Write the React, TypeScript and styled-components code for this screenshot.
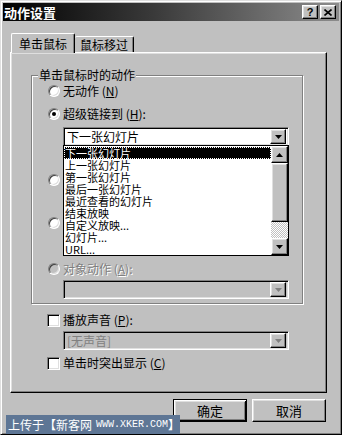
import React from 'react';
import styled, { createGlobalStyle, css } from 'styled-components';

const FONT = `"Noto Sans CJK SC", "Liberation Sans", sans-serif`;

const GlobalStyle = createGlobalStyle`
  html, body {
    margin: 0;
    padding: 0;
    background: #c0c0c0;
  }
  body {
    font-family: ${FONT};
    font-size: 12px;
    color: #000;
  }
  * {
    box-sizing: border-box;
  }
`;

const sunken = css`
  border: 1px solid;
  border-color: #808080 #fff #fff #808080;
  box-shadow: inset 1px 1px 0 #000, inset -1px -1px 0 #dfdfdf;
`;

const raised = css`
  border: 1px solid;
  border-color: #fff #000 #000 #fff;
  box-shadow: inset -1px -1px 0 #808080, inset 1px 1px 0 #dfdfdf;
`;

const Window = styled.div`
  position: relative;
  width: 342px;
  height: 435px;
  background: #c0c0c0;
  border: 1px solid;
  border-color: #dfdfdf #000 #000 #dfdfdf;
  box-shadow: inset 1px 1px 0 #fff, inset -1px -1px 0 #808080;
  padding: 2px;
  display: flex;
  flex-direction: column;
  overflow: hidden;
`;

const TitleBar = styled.div`
  height: 18px;
  display: flex;
  align-items: center;
  padding: 0 3px 0 1px;
  background: linear-gradient(90deg, #000 0%, #3a3a3a 45%, #8c8c8c 100%);
`;

const TitleText = styled.span`
  color: #fff;
  font-weight: bold;
  font-size: 13px;
  line-height: 15px;
`;

const TitleButtons = styled.div`
  margin-left: auto;
  display: flex;
  gap: 2px;
`;

const TitleButton = styled.div`
  ${raised};
  width: 16px;
  height: 14px;
  display: flex;
  align-items: center;
  justify-content: center;
  background: #c0c0c0;
  font-family: "Liberation Sans", sans-serif;
  font-weight: bold;
  font-size: 11px;
  line-height: 11px;
`;

const Body = styled.div`
  padding: 12px 12px 0 7px;
`;

const TabRow = styled.div`
  display: flex;
  align-items: flex-end;
  padding-left: 1px;
  height: 19px;
`;

const Tab = styled.div<{ $active?: boolean }>`
  position: relative;
  background: #c0c0c0;
  border-top: 1px solid #fff;
  border-left: 1px solid #fff;
  border-right: 1px solid #000;
  border-radius: 2px 2px 0 0;
  box-shadow: inset -1px 0 0 #808080;
  display: flex;
  align-items: center;
  font-size: 12px;
  ${(p) =>
    p.$active
      ? css`
          height: 20px;
          margin-bottom: -1px;
          padding: 0 7px 0 7px;
          z-index: 2;
        `
      : css`
          height: 16px;
          padding: 0 5px 0 5px;
          border-left: none;
        `}
`;

const Panel = styled.div`
  position: relative;
  height: 341px;
  border: 1px solid;
  border-color: #fff #000 #000 #fff;
  box-shadow: inset -1px -1px 0 #808080, inset 1px 1px 0 #dfdfdf;
  padding: 0 0 0 20px;
`;

const GroupBox = styled.div`
  position: relative;
  width: 272px;
  margin-top: 22px;
  padding: 0 0 4px 16px;
  border: 1px solid #808080;
  box-shadow: inset 1px 1px 0 #fff, 1px 1px 0 #fff;
`;

const GroupLabel = styled.span`
  position: absolute;
  top: -9px;
  left: 6px;
  padding: 0 1px;
  background: #c0c0c0;
  line-height: 16px;
`;

const OptionRow = styled.div<{ $mt: number; $ml?: number }>`
  display: flex;
  align-items: center;
  gap: 3px;
  height: 16px;
  margin-top: ${(p) => p.$mt}px;
  margin-left: ${(p) => p.$ml ?? 0}px;
  line-height: 16px;
`;

const Label = styled.span<{ $disabled?: boolean }>`
  white-space: nowrap;
  ${(p) =>
    p.$disabled &&
    css`
      color: #808080;
      text-shadow: 1px 1px 0 #fff;
    `}
`;

const Radio = styled.span<{ $checked?: boolean; $disabled?: boolean }>`
  position: relative;
  width: 12px;
  height: 12px;
  flex: none;
  border-radius: 50%;
  border: 1px solid;
  border-color: #808080 #fff #fff #808080;
  box-shadow: inset 1px 1px 0 #404040, inset -1px -1px 0 #dfdfdf;
  background: ${(p) => (p.$disabled ? '#c0c0c0' : '#fff')};
  &::after {
    content: '';
    display: ${(p) => (p.$checked ? 'block' : 'none')};
    position: absolute;
    left: 3px;
    top: 3px;
    width: 4px;
    height: 4px;
    border-radius: 50%;
    background: #000;
  }
`;

const Checkbox = styled.span`
  ${sunken};
  width: 13px;
  height: 13px;
  flex: none;
  background: #fff;
`;

const Field = styled.div<{ $mt: number; $ml: number; $w: number; $disabled?: boolean }>`
  ${sunken};
  position: relative;
  display: flex;
  align-items: center;
  width: ${(p) => p.$w}px;
  height: 19px;
  margin-top: ${(p) => p.$mt}px;
  margin-left: ${(p) => p.$ml}px;
  padding: 2px 2px 2px 3px;
  background: ${(p) => (p.$disabled ? '#c0c0c0' : '#fff')};
  color: ${(p) => (p.$disabled ? '#808080' : '#000')};
  line-height: 15px;
`;

const FieldText = styled.span`
  flex: 1;
  white-space: nowrap;
`;

const ArrowButton = styled.div<{ $h?: number; $w?: number }>`
  ${raised};
  width: ${(p) => p.$w ?? 16}px;
  height: ${(p) => p.$h ?? 15}px;
  flex: none;
  background: #c0c0c0;
  display: flex;
  align-items: center;
  justify-content: center;
`;

const FieldRow = styled.div<{ $mt: number }>`
  display: flex;
  gap: 4px;
  margin-top: ${(p) => p.$mt}px;
  margin-left: 15px;
`;

const SmallButton = styled.div`
  ${raised};
  width: 60px;
  height: 19px;
  background: #c0c0c0;
`;

const DropList = styled.div`
  position: absolute;
  top: 17px;
  left: -1px;
  width: 226px;
  height: 111px;
  z-index: 5;
  display: flex;
  border: 1px solid #000;
  background: #fff;
  color: #000;
`;

const ListItems = styled.div`
  flex: 1;
  padding-top: 1px;
`;

const ListItem = styled.div<{ $selected?: boolean }>`
  height: 12px;
  line-height: 12px;
  font-size: 11px;
  padding-left: 1px;
  white-space: nowrap;
  ${(p) =>
    p.$selected &&
    css`
      background: #000;
      color: #fff;
      outline: 1px dotted #fff;
      outline-offset: -1px;
    `}
`;

const ScrollBar = styled.div`
  width: 17px;
  display: flex;
  flex-direction: column;
`;

const ScrollThumb = styled.div`
  ${raised};
  height: 59px;
  background: #c0c0c0;
`;

const ScrollTrack = styled.div`
  flex: 1;
  background: repeating-conic-gradient(#fff 0 25%, #c0c0c0 0 50%) 0 0 / 2px 2px;
`;

const ButtonRow = styled.div`
  display: flex;
  justify-content: flex-end;
  gap: 5px;
  margin-top: 6px;
  padding-right: 1px;
`;

const PushButton = styled.div<{ $default?: boolean }>`
  width: 74px;
  height: 23px;
  display: flex;
  align-items: center;
  justify-content: center;
  background: #c0c0c0;
  font-size: 13px;
  ${(p) =>
    p.$default
      ? css`
          border: 1px solid #000;
          box-shadow: inset 1px 1px 0 #fff, inset -1px -1px 0 #000,
            inset 2px 2px 0 #dfdfdf, inset -2px -2px 0 #808080;
        `
      : raised}
`;

const Watermark = styled.div`
  position: absolute;
  left: 5px;
  top: 414px;
  height: 19px;
  padding: 0 0 0 2px;
  display: flex;
  align-items: center;
  background: #5e7695;
  color: #fff;
  font-size: 12px;
  white-space: nowrap;
`;

const WatermarkUrl = styled.span`
  font-family: "Liberation Mono", monospace;
  font-size: 10px;
  margin-left: 4px;
`;

const Arrow = ({ up, color = '#000' }: { up?: boolean; color?: string }) => (
  <svg width="7" height="4" viewBox="0 0 7 4">
    <path d={up ? 'M3.5 0L7 4H0z' : 'M0 0h7L3.5 4z'} fill={color} />
  </svg>
);

const Key = ({ k }: { k: string }) => (
  <>
    (<u>{k}</u>)
  </>
);

const items = [
  '下一张幻灯片',
  '上一张幻灯片',
  '第一张幻灯片',
  '最后一张幻灯片',
  '最近查看的幻灯片',
  '结束放映',
  '自定义放映...',
  '幻灯片...',
  'URL...',
];

export default function App() {
  return (
    <>
      <GlobalStyle />
      <Window>
        <TitleBar>
          <TitleText>动作设置</TitleText>
          <TitleButtons>
            <TitleButton>?</TitleButton>
            <TitleButton>
              <svg width="8" height="7" viewBox="0 0 8 7">
                <path d="M0.5 0.5L7.5 6.5M7.5 0.5L0.5 6.5" stroke="#000" strokeWidth="1.6" />
              </svg>
            </TitleButton>
          </TitleButtons>
        </TitleBar>

        <Body>
          <TabRow>
            <Tab $active>单击鼠标</Tab>
            <Tab>鼠标移过</Tab>
          </TabRow>
          <Panel>
            <GroupBox>
              <GroupLabel>单击鼠标时的动作</GroupLabel>
              <OptionRow $mt={7}>
                <Radio />
                <Label>
                  无动作 <Key k="N" />
                </Label>
              </OptionRow>
              <OptionRow $mt={7}>
                <Radio $checked />
                <Label>
                  超级链接到 <Key k="H" />:
                </Label>
              </OptionRow>
              <Field $mt={5} $ml={15} $w={226}>
                <FieldText>下一张幻灯片</FieldText>
                <ArrowButton>
                  <Arrow />
                </ArrowButton>
                <DropList>
                  <ListItems>
                    {items.map((t, i) => (
                      <ListItem key={t} $selected={i === 0}>
                        {t}
                      </ListItem>
                    ))}
                  </ListItems>
                  <ScrollBar>
                    <ArrowButton $h={17} $w={17}>
                      <Arrow up />
                    </ArrowButton>
                    <ScrollThumb />
                    <ScrollTrack />
                    <ArrowButton $h={17} $w={17}>
                      <Arrow />
                    </ArrowButton>
                  </ScrollBar>
                </DropList>
              </Field>
              {/* 运行程序 / 运行宏: covered by the open list */}
              <OptionRow $mt={26}>
                <Radio />
              </OptionRow>
              <FieldRow $mt={4}>
                <Field $mt={0} $ml={0} $w={160} $disabled />
                <SmallButton />
              </FieldRow>
              <OptionRow $mt={4}>
                <Radio />
              </OptionRow>
              <Field $mt={3} $ml={15} $w={226} $disabled>
                <FieldText />
                <ArrowButton>
                  <Arrow color="#808080" />
                </ArrowButton>
              </Field>
              <OptionRow $mt={8}>
                <Radio $disabled />
                <Label $disabled>
                  对象动作 <Key k="A" />:
                </Label>
              </OptionRow>
              <Field $mt={3} $ml={15} $w={226} $disabled>
                <FieldText />
                <ArrowButton>
                  <Arrow color="#808080" />
                </ArrowButton>
              </Field>
            </GroupBox>

            <OptionRow $mt={8} $ml={16}>
              <Checkbox />
              <Label>
                播放声音 <Key k="P" />:
              </Label>
            </OptionRow>
            <Field $mt={3} $ml={32} $w={226} $disabled>
              <FieldText>[无声音]</FieldText>
              <ArrowButton>
                <Arrow color="#808080" />
              </ArrowButton>
            </Field>
            <OptionRow $mt={5} $ml={16}>
              <Checkbox />
              <Label>
                单击时突出显示 <Key k="C" />
              </Label>
            </OptionRow>
          </Panel>

          <ButtonRow>
            <PushButton $default>确定</PushButton>
            <PushButton>取消</PushButton>
          </ButtonRow>
        </Body>

        <Watermark>
          上传于【新客网<WatermarkUrl>WWW.XKER.COM</WatermarkUrl>】
        </Watermark>
      </Window>
    </>
  );
}
